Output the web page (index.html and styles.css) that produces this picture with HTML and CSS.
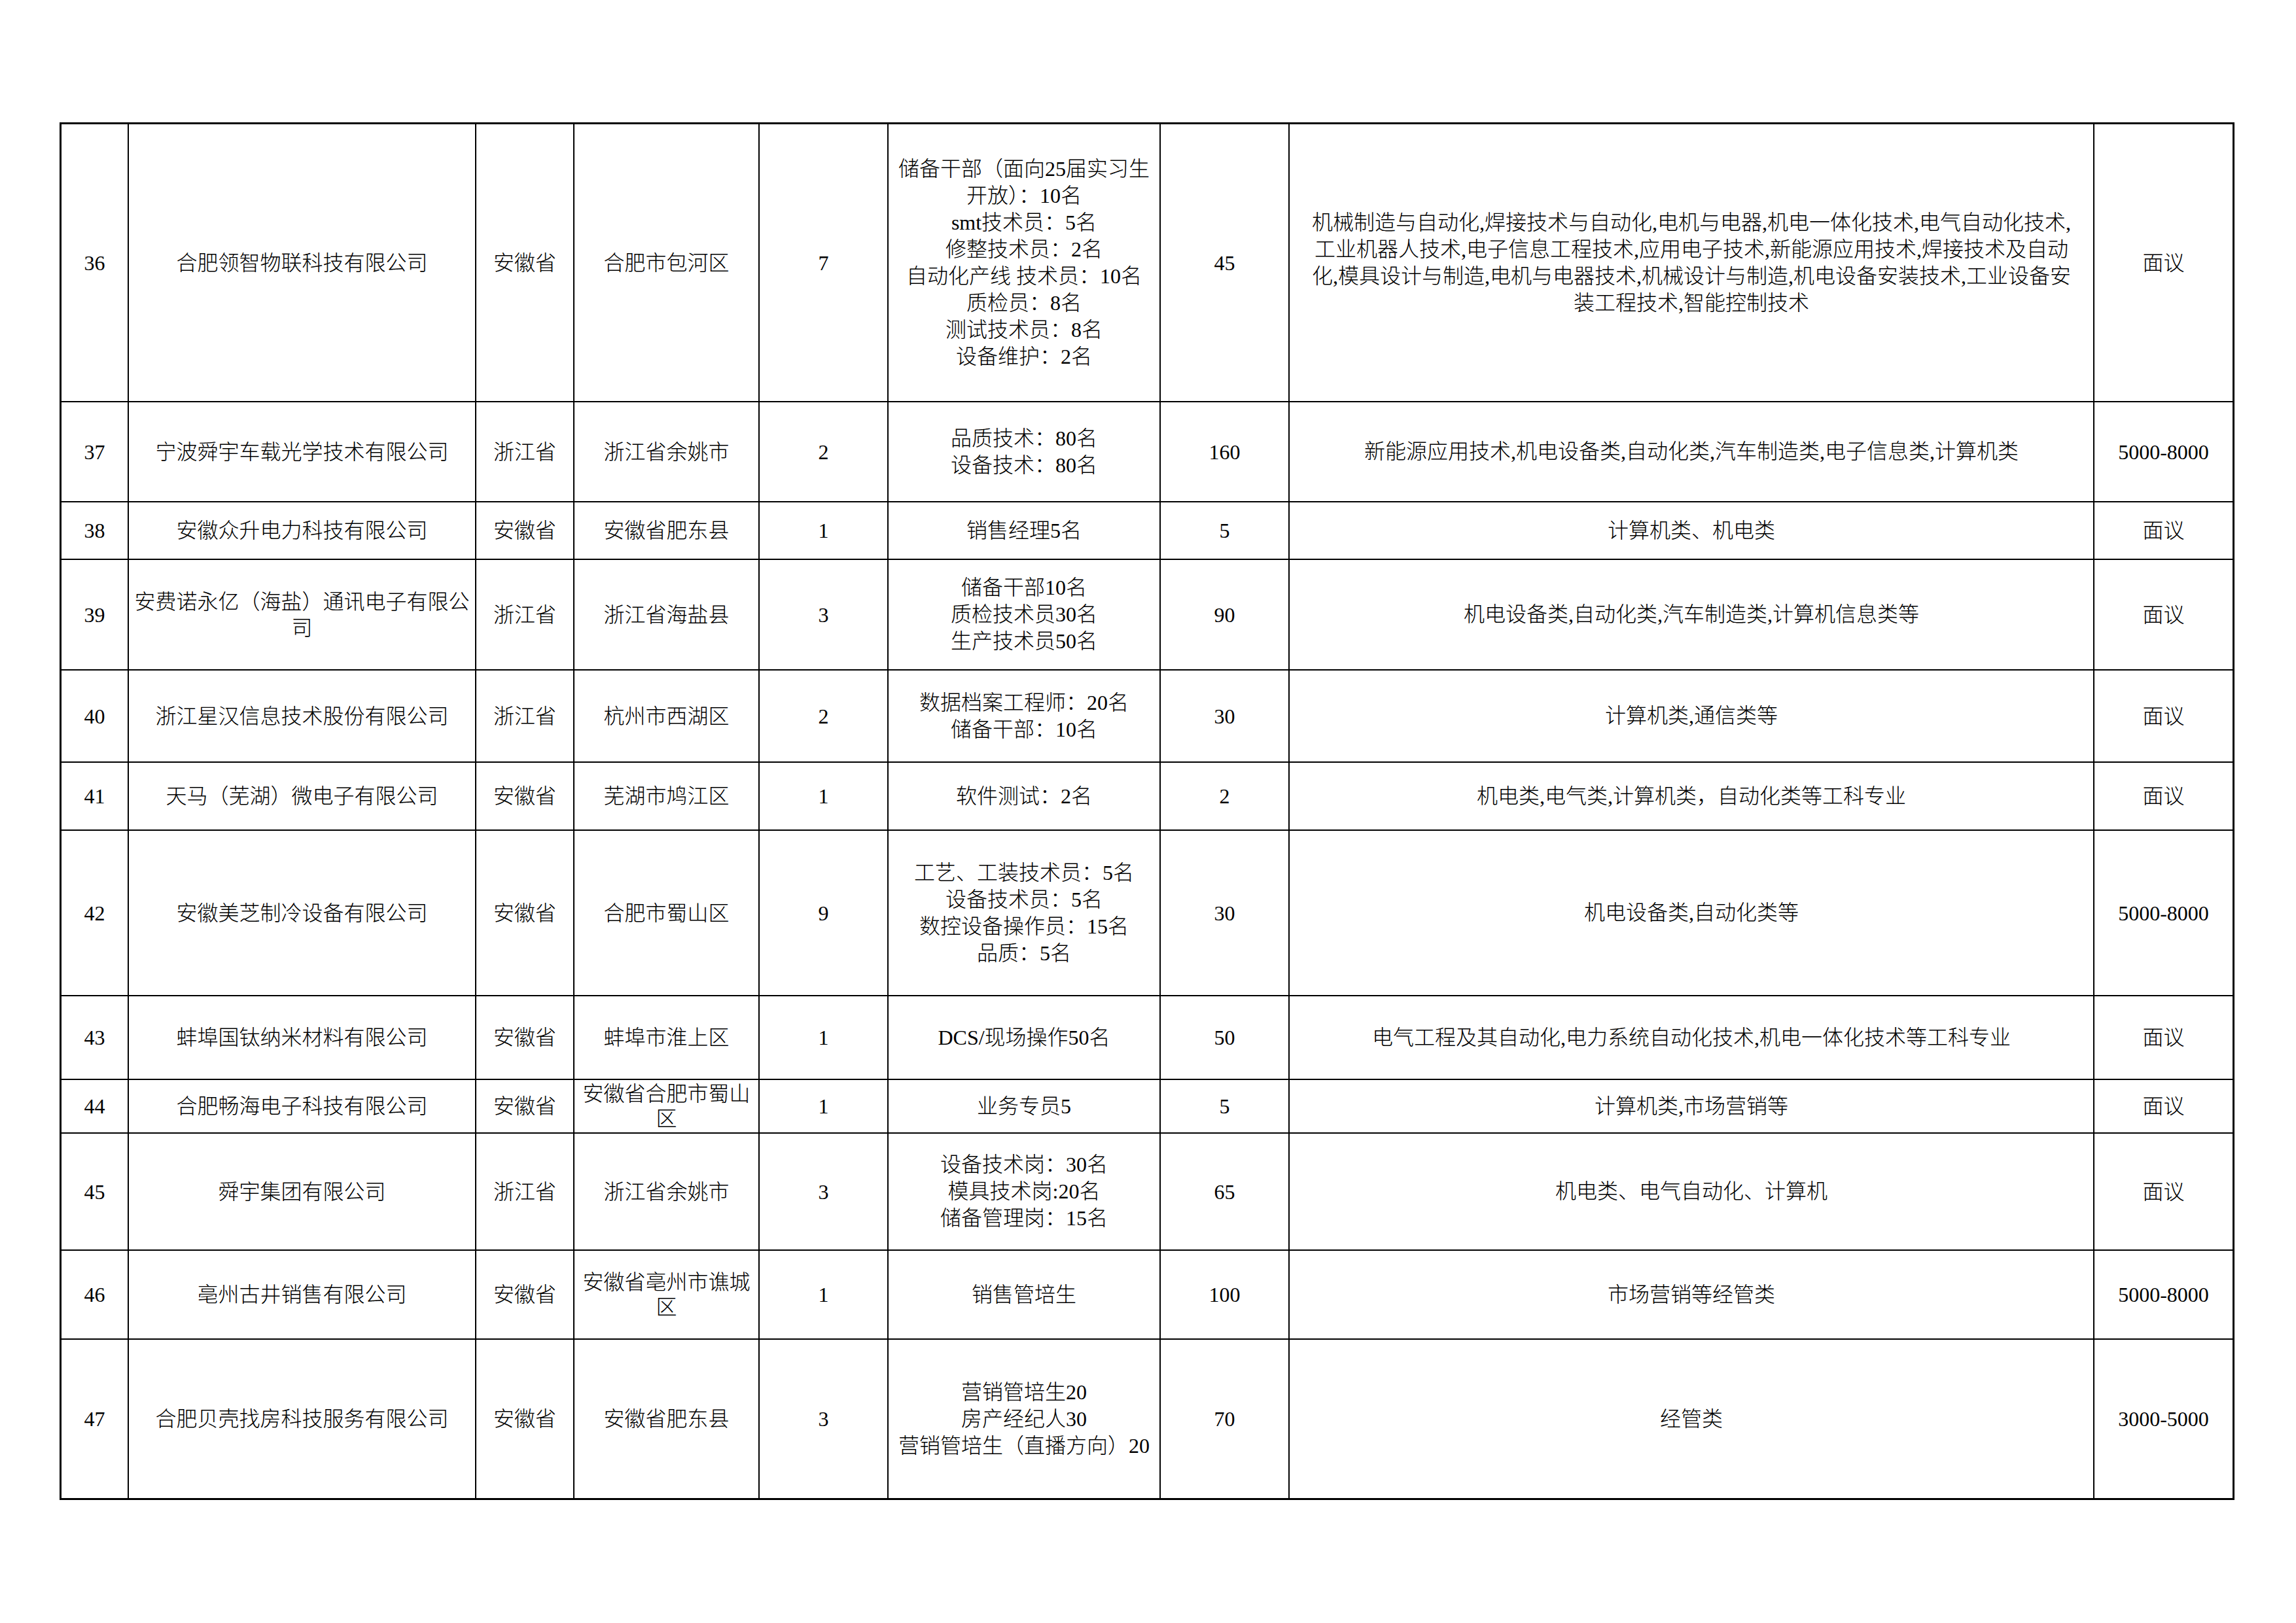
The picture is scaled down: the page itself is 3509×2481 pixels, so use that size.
FILE: index.html
```html
<!DOCTYPE html>
<html lang="zh-CN">
<head>
<meta charset="utf-8">
<title>招聘信息表</title>
<link rel="stylesheet" href="styles.css">
</head>
<body>
<div class="sheet">
<table class="jobs">
  <colgroup>
    <col class="c-no">
    <col class="c-name">
    <col class="c-prov">
    <col class="c-loc">
    <col class="c-kinds">
    <col class="c-job">
    <col class="c-num">
    <col class="c-major">
    <col class="c-pay">
  </colgroup>
  <tbody>
    <tr class="r36">
      <td>36</td>
      <td>合肥领智物联科技有限公司</td>
      <td>安徽省</td>
      <td class="loc">合肥市包河区</td>
      <td>7</td>
      <td class="job">储备干部（面向25届实习生<br>开放）：10名<br>smt技术员：5名<br>修整技术员：2名<br>自动化产线 技术员：10名<br>质检员：8名<br>测试技术员：8名<br>设备维护：2名</td>
      <td>45</td>
      <td class="major">机械制造与自动化,焊接技术与自动化,电机与电器,机电一体化技术,电气自动化技术,<br>工业机器人技术,电子信息工程技术,应用电子技术,新能源应用技术,焊接技术及自动<br>化,模具设计与制造,电机与电器技术,机械设计与制造,机电设备安装技术,工业设备安<br>装工程技术,智能控制技术</td>
      <td>面议</td>
    </tr>
    <tr class="r37">
      <td>37</td>
      <td>宁波舜宇车载光学技术有限公司</td>
      <td>浙江省</td>
      <td class="loc">浙江省余姚市</td>
      <td>2</td>
      <td class="job">品质技术：80名<br>设备技术：80名</td>
      <td>160</td>
      <td class="major">新能源应用技术,机电设备类,自动化类,汽车制造类,电子信息类,计算机类</td>
      <td>5000-8000</td>
    </tr>
    <tr class="r38">
      <td>38</td>
      <td>安徽众升电力科技有限公司</td>
      <td>安徽省</td>
      <td class="loc">安徽省肥东县</td>
      <td>1</td>
      <td class="job">销售经理5名</td>
      <td>5</td>
      <td class="major">计算机类、机电类</td>
      <td>面议</td>
    </tr>
    <tr class="r39">
      <td>39</td>
      <td>安费诺永亿（海盐）通讯电子有限公<br>司</td>
      <td>浙江省</td>
      <td class="loc">浙江省海盐县</td>
      <td>3</td>
      <td class="job">储备干部10名<br>质检技术员30名<br>生产技术员50名</td>
      <td>90</td>
      <td class="major">机电设备类,自动化类,汽车制造类,计算机信息类等</td>
      <td>面议</td>
    </tr>
    <tr class="r40">
      <td>40</td>
      <td>浙江星汉信息技术股份有限公司</td>
      <td>浙江省</td>
      <td class="loc">杭州市西湖区</td>
      <td>2</td>
      <td class="job">数据档案工程师：20名<br>储备干部：10名</td>
      <td>30</td>
      <td class="major">计算机类,通信类等</td>
      <td>面议</td>
    </tr>
    <tr class="r41">
      <td>41</td>
      <td>天马（芜湖）微电子有限公司</td>
      <td>安徽省</td>
      <td class="loc">芜湖市鸠江区</td>
      <td>1</td>
      <td class="job">软件测试：2名</td>
      <td>2</td>
      <td class="major">机电类,电气类,计算机类，自动化类等工科专业</td>
      <td>面议</td>
    </tr>
    <tr class="r42">
      <td>42</td>
      <td>安徽美芝制冷设备有限公司</td>
      <td>安徽省</td>
      <td class="loc">合肥市蜀山区</td>
      <td>9</td>
      <td class="job">工艺、工装技术员：5名<br>设备技术员：5名<br>数控设备操作员：15名<br>品质：5名</td>
      <td>30</td>
      <td class="major">机电设备类,自动化类等</td>
      <td>5000-8000</td>
    </tr>
    <tr class="r43">
      <td>43</td>
      <td>蚌埠国钛纳米材料有限公司</td>
      <td>安徽省</td>
      <td class="loc">蚌埠市淮上区</td>
      <td>1</td>
      <td class="job">DCS/现场操作50名</td>
      <td>50</td>
      <td class="major">电气工程及其自动化,电力系统自动化技术,机电一体化技术等工科专业</td>
      <td>面议</td>
    </tr>
    <tr class="r44">
      <td>44</td>
      <td>合肥畅海电子科技有限公司</td>
      <td>安徽省</td>
      <td class="loc">安徽省合肥市蜀山<br>区</td>
      <td>1</td>
      <td class="job">业务专员5</td>
      <td>5</td>
      <td class="major">计算机类,市场营销等</td>
      <td>面议</td>
    </tr>
    <tr class="r45">
      <td>45</td>
      <td>舜宇集团有限公司</td>
      <td>浙江省</td>
      <td class="loc">浙江省余姚市</td>
      <td>3</td>
      <td class="job">设备技术岗：30名<br>模具技术岗:20名<br>储备管理岗：15名</td>
      <td>65</td>
      <td class="major">机电类、电气自动化、计算机</td>
      <td>面议</td>
    </tr>
    <tr class="r46">
      <td>46</td>
      <td>亳州古井销售有限公司</td>
      <td>安徽省</td>
      <td class="loc">安徽省亳州市谯城<br>区</td>
      <td>1</td>
      <td class="job">销售管培生</td>
      <td>100</td>
      <td class="major">市场营销等经管类</td>
      <td>5000-8000</td>
    </tr>
    <tr class="r47">
      <td>47</td>
      <td>合肥贝壳找房科技服务有限公司</td>
      <td>安徽省</td>
      <td class="loc">安徽省肥东县</td>
      <td>3</td>
      <td class="job">营销管培生20<br>房产经纪人30<br>营销管培生（直播方向）20</td>
      <td>70</td>
      <td class="major">经管类</td>
      <td>3000-5000</td>
    </tr>
  </tbody>
</table>
</div>
</body>
</html>
```

FILE: styles.css
```css
html, body {
  margin: 0;
  padding: 0;
  background: #ffffff;
}

.sheet {
  padding: 187px 0 0 91px;
}

.jobs {
  box-sizing: border-box;
  width: 3324px;
  table-layout: fixed;
  border-collapse: separate;
  border-spacing: 0;
  border-top: 3px solid #000;
  border-left: 3px solid #000;
  font-family: "Liberation Serif", "Noto Sans CJK SC", serif;
  font-size: 32px;
  font-weight: 300;
  color: #000;
}

.c-no { width: 103px; }
.c-name { width: 531px; }
.c-prov { width: 150px; }
.c-loc { width: 283px; }
.c-kinds { width: 197px; }
.c-job { width: 416px; }
.c-num { width: 197px; }
.c-major { width: 1230px; }
.c-pay { width: 214px; }

.jobs td {
  box-sizing: border-box;
  border-right: 2px solid #000;
  border-bottom: 2px solid #000;
  padding: 0 6px;
  text-align: center;
  vertical-align: middle;
  line-height: 40px;
  white-space: nowrap;
  overflow: hidden;
}

.jobs td:last-child {
  border-right-width: 3px;
}

.jobs tr:last-child td {
  border-bottom-width: 3px;
}

.jobs td.job {
  line-height: 41px;
}

.jobs td.major {
  line-height: 41px;
  word-spacing: 0;
}

.jobs td.loc {
  line-height: 38px;
}

.r36 { height: 425px; }
.r37 { height: 153px; }
.r38 { height: 88px; }
.r39 { height: 169px; }
.r40 { height: 141px; }
.r41 { height: 104px; }
.r42 { height: 253px; }
.r43 { height: 128px; }
.r44 { height: 82px; }
.r45 { height: 179px; }
.r46 { height: 136px; }
.r47 { height: 245px; }
```
